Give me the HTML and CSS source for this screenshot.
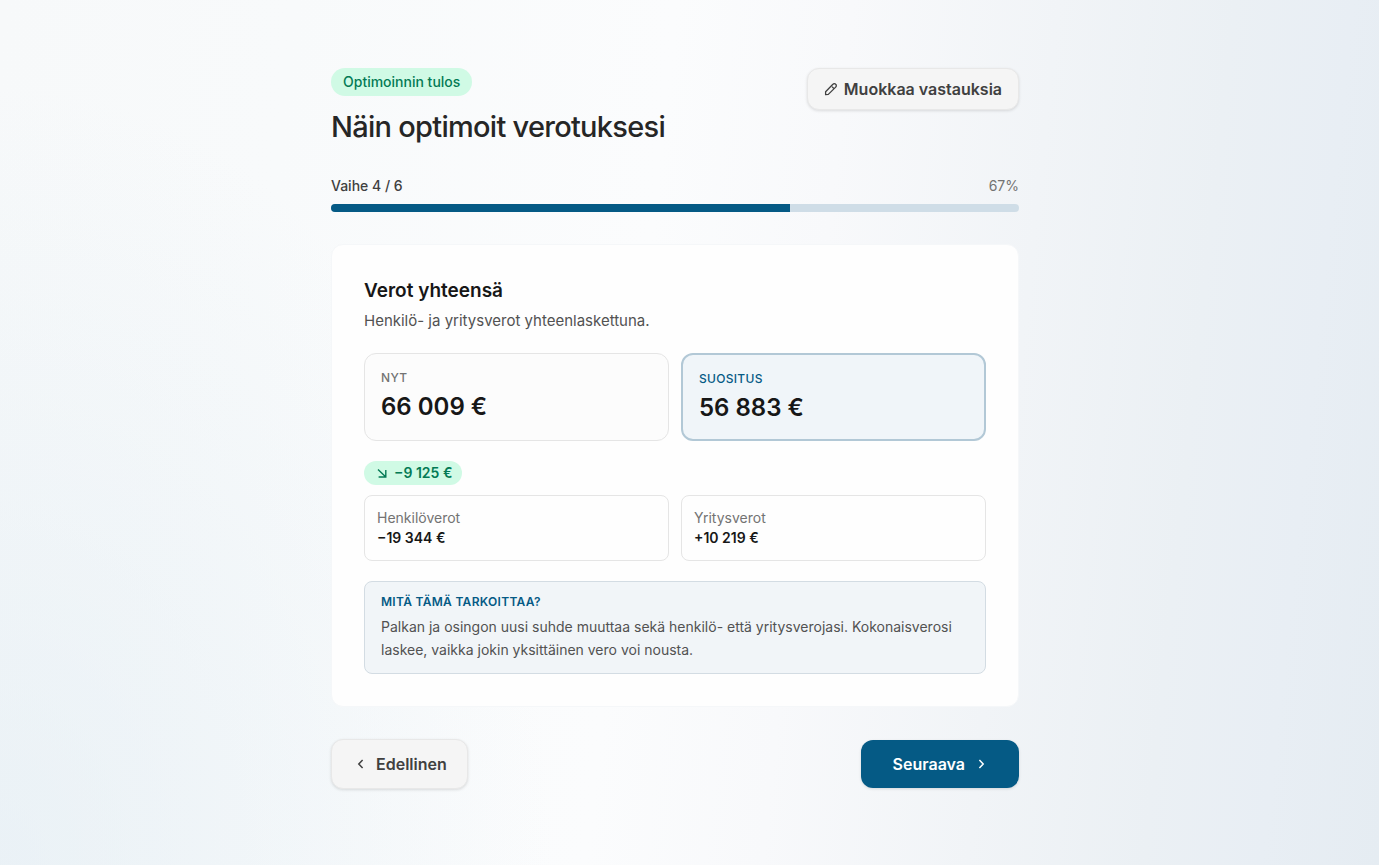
FILE: index.html
```html
<!DOCTYPE html>
<html lang="fi">
<head>
<meta charset="utf-8">
<meta name="viewport" content="width=device-width, initial-scale=1">
<title>Näin optimoit verotuksesi</title>
<link rel="stylesheet" href="styles.css">
</head>
<body>
<main class="wizard">
  <header class="wizard-header">
    <div>
      <span class="badge badge-result">Optimoinnin tulos</span>
      <h1 class="page-title">Näin optimoit verotuksesi</h1>
    </div>
    <button class="button button-edit" type="button">
      <svg class="icon-pencil" viewBox="0 0 14 14" fill="none" stroke="currentColor" stroke-width="1.3" stroke-linejoin="round" aria-hidden="true"><path d="M1.6 12.6V9.7l7.3-7.4a1.9 1.9 0 0 1 2.8 0 1.9 1.9 0 0 1 0 2.8l-7.4 7.3zM8 4.6l1.6 1.6"/></svg>
      Muokkaa vastauksia
    </button>
  </header>

  <section class="progress">
    <div class="progress-labels">
      <span class="progress-step" id="step-label">Vaihe 4 / 6</span>
      <span class="progress-percent">67%</span>
    </div>
    <div class="progress-track" role="progressbar" aria-labelledby="step-label" aria-valuenow="67" aria-valuemin="0" aria-valuemax="100">
      <div class="progress-fill" style="width: 66.67%"></div>
    </div>
  </section>

  <section class="card">
    <h2 class="card-title">Verot yhteensä</h2>
    <p class="card-subtitle">Henkilö- ja yritysverot yhteenlaskettuna.</p>

    <div class="pair totals">
      <div class="total">
        <p class="total-label">NYT</p>
        <p class="total-value">66 009 €</p>
      </div>
      <div class="total total-recommended">
        <p class="total-label">SUOSITUS</p>
        <p class="total-value">56 883 €</p>
      </div>
    </div>

    <div class="badge badge-change">
      <svg class="icon-arrow" viewBox="0 0 12 12" fill="none" stroke="currentColor" stroke-width="1.4" aria-hidden="true"><path d="M2 2.4l7.6 7.4M9.8 3v7H2.6"/></svg>
      −9 125 €
    </div>

    <div class="pair parts">
      <div class="part">
        <p class="part-label">Henkilöverot</p>
        <p class="part-value">−19 344 €</p>
      </div>
      <div class="part">
        <p class="part-label">Yritysverot</p>
        <p class="part-value">+10 219 €</p>
      </div>
    </div>

    <aside class="note">
      <h3 class="note-title">MITÄ TÄMÄ TARKOITTAA?</h3>
      <p class="note-text">Palkan ja osingon uusi suhde muuttaa sekä henkilö- että yritysverojasi. Kokonaisverosi laskee, vaikka jokin yksittäinen vero voi nousta.</p>
    </aside>
  </section>

  <nav class="wizard-nav">
    <button class="button button-previous" type="button">
      <svg class="icon-chevron" viewBox="0 0 10 12" fill="none" stroke="currentColor" stroke-width="1.5" aria-hidden="true"><path d="M6.6 2L2.8 6l3.8 4"/></svg>
      Edellinen
    </button>
    <button class="button button-next" type="button">
      Seuraava
      <svg class="icon-chevron" viewBox="0 0 10 12" fill="none" stroke="currentColor" stroke-width="1.5" aria-hidden="true"><path d="M2.4 2l3.8 4-3.8 4"/></svg>
    </button>
  </nav>
</main>
</body>
</html>
```
FILE: styles.css
```css
* {
  box-sizing: border-box;
}

body,
h1,
h2,
h3,
p {
  margin: 0;
}

body {
  min-height: 100vh;
  padding: 68px 45px 68px 16px;
  font-family: Inter, "Liberation Sans", sans-serif;
  font-size: 16px;
  line-height: 24px;
  color: #171717;
  background:
    radial-gradient(ellipse 40% 90% at 0% 100%, rgba(225, 236, 243, 0.6), rgba(225, 236, 243, 0)),
    linear-gradient(96deg, #f7f9fa 0%, #f8fafb 20%, #fbfcfd 46%, #f8f9fb 58%, #f1f4f7 72%, #ebf0f4 84%, #e8eef4 92%, #e5ecf2 100%);
}

.wizard {
  max-width: 688px;
  margin: 0 auto;
}

.wizard-header {
  display: flex;
  align-items: flex-start;
  justify-content: space-between;
  gap: 16px;
}

.badge {
  display: flex;
  align-items: center;
  width: fit-content;
  border-radius: 14px;
  font-size: 14px;
  line-height: 20px;
  color: #047a55;
  background: #d0fae5;
}

.badge-result {
  padding: 4px 12px;
  font-weight: 500;
}

.page-title {
  margin-top: 14px;
  font-size: 29px;
  line-height: 34px;
  font-weight: 500;
  letter-spacing: -0.025em;
  color: #262626;
}

.button {
  display: flex;
  align-items: center;
  justify-content: center;
  border: 1px solid #e8e8e8;
  border-radius: 12px;
  font-family: inherit;
  font-size: 16px;
  line-height: 24px;
  font-weight: 600;
  color: #404040;
  background: #f5f5f5;
  box-shadow: 0 1px 3px rgba(0, 0, 0, 0.12);
  cursor: pointer;
}

.button-edit {
  gap: 6px;
  padding: 8px 16px;
}

.icon-pencil {
  width: 14px;
  height: 14px;
}

.progress {
  margin-top: 32px;
}

.progress-labels {
  display: flex;
  justify-content: space-between;
  font-size: 14px;
  line-height: 20px;
}

.progress-step {
  font-weight: 500;
  color: #404040;
}

.progress-percent {
  color: #737373;
}

.progress-track {
  height: 8px;
  margin-top: 8px;
  overflow: hidden;
  border-radius: 4px;
  background: #cfdde7;
}

.progress-fill {
  height: 100%;
  background: #055a85;
}

.card {
  margin-top: 32px;
  padding: 32px;
  border: 1px solid #f5f7f9;
  border-radius: 12px;
  background: #fefefe;
}

.card-title {
  font-size: 19px;
  line-height: 28px;
  font-weight: 600;
}

.card-subtitle {
  margin-top: 4px;
  font-size: 15px;
  color: #525252;
}

.pair {
  display: grid;
  grid-template-columns: 1fr 1fr;
  gap: 12px;
}

.totals {
  margin: 20px 0;
}

.total {
  padding: 16px;
  border: 1px solid #e5e5e5;
  border-radius: 12px;
  background: #fcfcfc;
}

.total-recommended {
  border: 2px solid #b2c8d6;
  background: #f0f5f9;
}

.total-label {
  font-size: 12px;
  line-height: 16px;
  font-weight: 500;
  letter-spacing: 0.025em;
  color: #737373;
}

.total-recommended .total-label {
  color: #055a85;
}

.total-value {
  margin-top: 6px;
  font-size: 24px;
  line-height: 30px;
  font-weight: 600;
}

.badge-change {
  gap: 6px;
  padding: 2px 10px 2px 12px;
  font-weight: 600;
}

.icon-arrow {
  width: 12px;
  height: 12px;
}

.parts {
  margin: 10px 0 20px;
}

.part {
  padding: 12px;
  border: 1px solid #e5e5e5;
  border-radius: 8px;
  font-size: 14px;
  line-height: 20px;
}

.part-label {
  color: #737373;
}

.part-value {
  font-weight: 600;
}

.note {
  padding: 12px 16px;
  border: 1px solid #d3dce3;
  border-radius: 8px;
  background: #f1f5f8;
}

.note-title {
  font-size: 12px;
  line-height: 16px;
  font-weight: 600;
  letter-spacing: 0.025em;
  color: #055a85;
}

.note-text {
  margin-top: 5px;
  font-size: 14px;
  line-height: 23px;
  color: #525252;
}

.wizard-nav {
  display: flex;
  align-items: center;
  justify-content: space-between;
  margin-top: 32px;
}

.button-previous {
  gap: 10px;
  padding: 12px 20px 12px 24px;
}

.button-next {
  gap: 12px;
  padding: 12px 32px;
  border: 0;
  color: #ffffff;
  background: #055a85;
}

.icon-chevron {
  width: 10px;
  height: 12px;
}
```
